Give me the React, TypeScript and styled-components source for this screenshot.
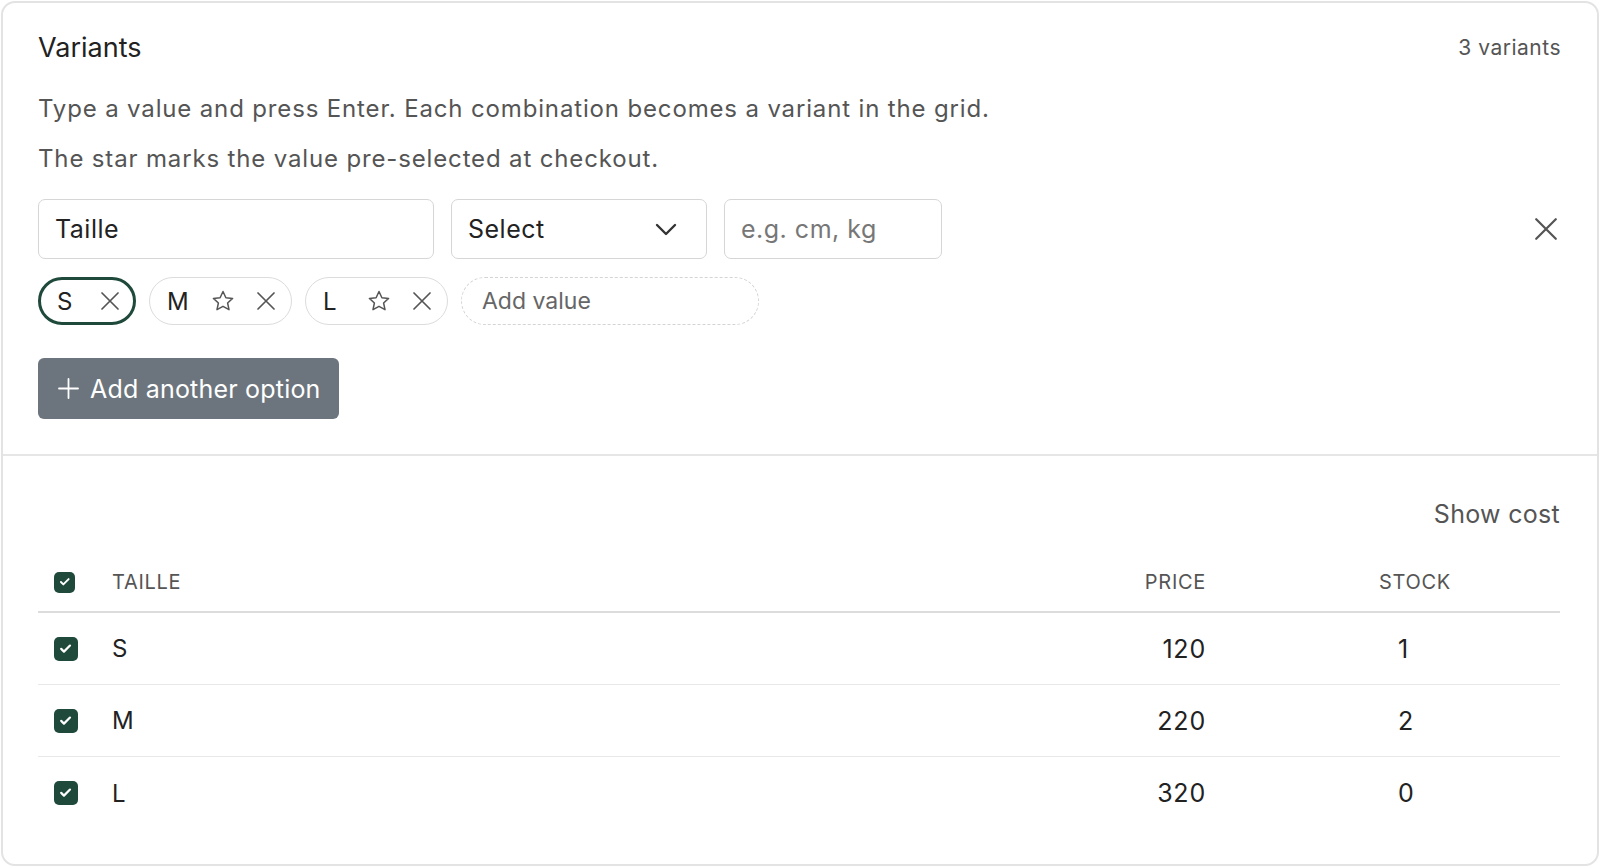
import React from 'react';
import styled, { createGlobalStyle } from 'styled-components';

const FONT = `Inter, 'Liberation Sans', Arial, sans-serif`;

const GlobalStyle = createGlobalStyle`
  html, body {
    margin: 0;
    background: #ffffff;
    font-family: ${FONT};
    color: #222;
  }
  * {
    box-sizing: border-box;
  }
`;

const Page = styled.div`
  padding: 1px;
  height: 100vh;
`;

const Card = styled.section`
  height: 100%;
  border: 2px solid #e3e3e3;
  border-radius: 14px;
  display: flex;
  flex-direction: column;
`;

const Editor = styled.div`
  padding: 27px 36px 35px 35px;
  border-bottom: 2px solid #e6e6e6;
`;

const TitleRow = styled.div`
  display: flex;
  justify-content: space-between;
  align-items: center;
  height: 34px;
`;

const Title = styled.h2`
  margin: 0;
  font-size: 27px;
  font-weight: 400;
  color: #222;
`;

const Count = styled.span`
  font-size: 21px;
  letter-spacing: 0.5px;
  color: #555;
`;

const Hint = styled.p<{ $gap: number }>`
  margin: ${(p) => p.$gap}px 0 0;
  font-size: 24px;
  letter-spacing: 0.85px;
  line-height: 36px;
  color: #555;
`;

const FieldRow = styled.div`
  display: flex;
  align-items: center;
  gap: 17px;
  margin-top: 22px;
`;

const Field = styled.div<{ $w: number; $muted?: boolean }>`
  width: ${(p) => p.$w}px;
  height: 60px;
  display: flex;
  align-items: center;
  justify-content: space-between;
  padding: 0 29px 0 16px;
  border: 1.5px solid #d6d6d6;
  border-radius: 7px;
  font-size: 25px;
  letter-spacing: 0.5px;
  color: ${(p) => (p.$muted ? '#777' : '#222')};
`;

const RemoveOption = styled.button`
  margin-left: auto;
  margin-right: 4px;
  border: none;
  background: none;
  padding: 0;
  display: flex;
  color: #555;
  cursor: pointer;
`;

const ChipRow = styled.div`
  display: flex;
  align-items: center;
  gap: 13px;
  margin-top: 18px;
`;

const Chip = styled.div<{ $active?: boolean }>`
  height: 48px;
  display: inline-flex;
  align-items: center;
  gap: 22px;
  padding: ${(p) => (p.$active ? '0 14px 0 16px' : '0 16px 0 17px')};
  border: ${(p) => (p.$active ? '3px solid #1f4a3b' : '1.5px solid #dcdcdc')};
  border-radius: 24px;
  font-size: 24px;
  color: #222;
`;

const ChipLabel = styled.span`
  min-width: 22px;
`;

const IconBtn = styled.span`
  display: flex;
  color: #555;
`;

const AddValue = styled.div`
  width: 298px;
  height: 48px;
  display: flex;
  align-items: center;
  padding: 0 20px;
  border: 1.5px dashed #d4d4d4;
  border-radius: 24px;
  font-size: 23px;
  color: #666;
`;

const AddOption = styled.button`
  margin-top: 33px;
  height: 61px;
  display: inline-flex;
  align-items: center;
  gap: 11px;
  padding: 0 18px 0 20px;
  border: none;
  border-radius: 6px;
  background: #6c757d;
  color: #fff;
  font-family: ${FONT};
  font-size: 25px;
  letter-spacing: 0.2px;
`;

const Grid = styled.div`
  padding: 42px 37px 0 35px;
`;

const Toolbar = styled.div`
  display: flex;
  justify-content: flex-end;
  font-size: 25px;
  letter-spacing: 0.3px;
  line-height: 32px;
  color: #555;
`;

const Table = styled.div`
  margin-top: 23px;
`;

const Row = styled.div<{ $head?: boolean }>`
  display: grid;
  grid-template-columns: 74px 1fr 222px 354px;
  align-items: center;
  height: ${(p) => (p.$head ? 60 : 72)}px;
  border-bottom: ${(p) => (p.$head ? '2px solid #dcdcdc' : '1.5px solid #e8e8e8')};
  &:last-child {
    border-bottom: none;
  }
`;

const Cell = styled.div<{ $head?: boolean; $num?: boolean; $align?: 'left' | 'right'; $pad?: number }>`
  text-align: ${(p) => p.$align || 'left'};
  padding-left: ${(p) => p.$pad || 0}px;
  font-size: ${(p) => (p.$head ? 20 : p.$num ? 25 : 24)}px;
  letter-spacing: ${(p) => (p.$head ? '0.7px' : p.$num ? '0.8px' : '0')};
  text-transform: ${(p) => (p.$head ? 'uppercase' : 'none')};
  color: ${(p) => (p.$head ? '#555' : '#222')};
`;

const CheckCell = styled.div`
  padding-left: 16px;
  display: flex;
`;

const Box = styled.span<{ $size: number }>`
  width: ${(p) => p.$size}px;
  height: ${(p) => p.$size}px;
  border-radius: 5px;
  background: #1f4a3b;
  display: flex;
  align-items: center;
  justify-content: center;
`;

const XIcon = ({ size = 18, stroke = 1.7 }: { size?: number; stroke?: number }) => (
  <svg width={size} height={size} viewBox="0 0 18 18" fill="none">
    <path d="M1 1l16 16M17 1L1 17" stroke="currentColor" strokeWidth={stroke} strokeLinecap="round" />
  </svg>
);

const StarIcon = () => (
  <svg width={24} height={24} viewBox="0 0 24 24" fill="none">
    <polygon
      points="12,2.5 14.9,8.7 21.6,9.4 16.6,14 18,20.7 12,17.3 6,20.7 7.4,14 2.4,9.4 9.1,8.7"
      stroke="currentColor"
      strokeWidth={1.5}
      strokeLinejoin="round"
    />
  </svg>
);

const Chevron = () => (
  <svg width={22} height={13} viewBox="0 0 22 13" fill="none">
    <path d="M2 2l9 9 9-9" stroke="#333" strokeWidth={2.4} strokeLinecap="round" strokeLinejoin="round" />
  </svg>
);

const Plus = () => (
  <svg width={21} height={21} viewBox="0 0 21 21" fill="none">
    <path d="M10.5 1v19M1 10.5h19" stroke="#fff" strokeWidth={1.8} strokeLinecap="round" />
  </svg>
);

const Check = ({ size }: { size: number }) => (
  <Box $size={size}>
    <svg width={size * 0.55} height={size * 0.55} viewBox="0 0 24 24" fill="none">
      <path d="M4 12.5l5 5L20 6.5" stroke="#fff" strokeWidth={4} strokeLinecap="round" strokeLinejoin="round" />
    </svg>
  </Box>
);

const values = [
  { name: 'S', active: true },
  { name: 'M', active: false },
  { name: 'L', active: false },
];

const variants = [
  { size: 'S', price: 120, stock: 1 },
  { size: 'M', price: 220, stock: 2 },
  { size: 'L', price: 320, stock: 0 },
];

function App() {
  return (
    <>
      <GlobalStyle />
      <Page>
        <Card>
          <Editor>
            <TitleRow>
              <Title>Variants</Title>
              <Count>3 variants</Count>
            </TitleRow>
            <Hint $gap={27}>
              Type a value and press Enter. Each combination becomes a variant in the grid.
            </Hint>
            <Hint $gap={14}>The star marks the value pre-selected at checkout.</Hint>
            <FieldRow>
              <Field $w={396}>Taille</Field>
              <Field $w={256}>
                Select
                <Chevron />
              </Field>
              <Field $w={218} $muted>
                e.g. cm, kg
              </Field>
              <RemoveOption>
                <XIcon size={22} stroke={1.8} />
              </RemoveOption>
            </FieldRow>
            <ChipRow>
              {values.map((v) => (
                <Chip key={v.name} $active={v.active}>
                  <ChipLabel>{v.name}</ChipLabel>
                  {!v.active && (
                    <IconBtn>
                      <StarIcon />
                    </IconBtn>
                  )}
                  <IconBtn>
                    <XIcon />
                  </IconBtn>
                </Chip>
              ))}
              <AddValue>Add value</AddValue>
            </ChipRow>
            <AddOption>
              <Plus />
              Add another option
            </AddOption>
          </Editor>
          <Grid>
            <Toolbar>Show cost</Toolbar>
            <Table>
              <Row $head>
                <CheckCell>
                  <Check size={21} />
                </CheckCell>
                <Cell $head>Taille</Cell>
                <Cell $head $align="right">
                  Price
                </Cell>
                <Cell $head $pad={173}>
                  Stock
                </Cell>
              </Row>
              {variants.map((v) => (
                <Row key={v.size}>
                  <CheckCell>
                    <Check size={24} />
                  </CheckCell>
                  <Cell>{v.size}</Cell>
                  <Cell $num $align="right">
                    {v.price}
                  </Cell>
                  <Cell $num $pad={192}>
                    {v.stock}
                  </Cell>
                </Row>
              ))}
            </Table>
          </Grid>
        </Card>
      </Page>
    </>
  );
}

export default App;
